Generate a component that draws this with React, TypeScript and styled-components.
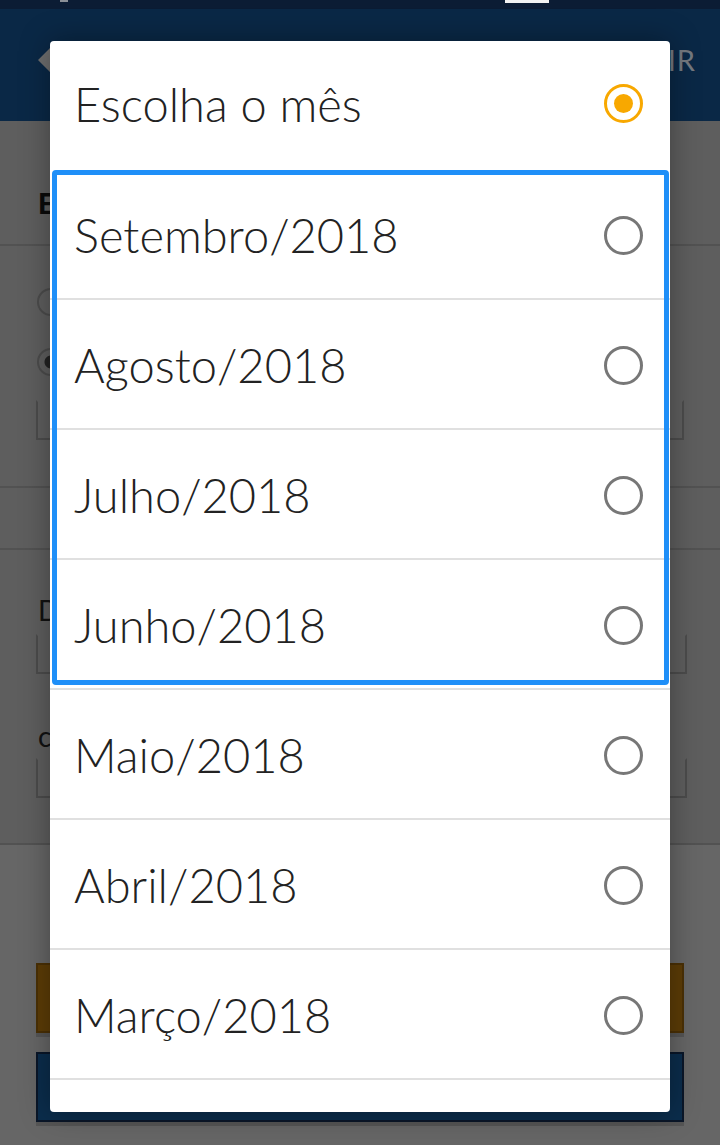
import React from 'react';
import styled, { createGlobalStyle } from 'styled-components';

const GlobalStyle = createGlobalStyle`
  html, body {
    margin: 0;
    padding: 0;
    background: #666666;
  }
  body {
    font-family: Lato, 'Open Sans', sans-serif;
  }
`;

const months = [
  'Setembro/2018',
  'Agosto/2018',
  'Julho/2018',
  'Junho/2018',
  'Maio/2018',
  'Abril/2018',
  'Março/2018',
];

const Screen = styled.div`
  position: relative;
  width: 720px;
  height: 1145px;
  overflow: hidden;
  background: #666666;
`;

const StatusBar = styled.div`
  height: 9px;
  background: #0b1c34;
  display: flex;
  align-items: flex-start;
  padding-left: 60px;
  gap: 437px;

  span {
    display: block;
    width: 8px;
    height: 2px;
    background: #8a8f96;
  }
  span + span {
    width: 44px;
    height: 3px;
    background: #f2f2f2;
  }
`;

const Header = styled.header`
  height: 112px;
  background: #0a2846;
  display: flex;
  align-items: center;
  justify-content: space-between;
  padding: 0 24px 0 38px;
  color: #74797f;
  font-size: 29px;
`;

const BackIcon = styled.svg`
  width: 30px;
  height: 24px;
  margin-top: -10px;
`;

const HeaderAction = styled.span`
  margin-top: -12px;
  letter-spacing: 1px;
`;

const Card = styled.section`
  background: #5e5e5e;
  border-bottom: 2px solid #525252;
  height: 724px;
  box-sizing: border-box;
`;

const CardTitle = styled.h2`
  margin: 0;
  height: 125px;
  box-sizing: border-box;
  padding: 68px 0 0 38px;
  font-size: 28px;
  line-height: 28px;
  font-weight: 900;
  color: #0a0a0a;
  border-bottom: 2px solid #525252;
`;

const Block = styled.div<{ $h: number }>`
  height: ${({ $h }) => $h}px;
  box-sizing: border-box;
  padding: 0 36px;
  border-bottom: 2px solid #525252;
  display: flex;
  flex-direction: column;
`;

const GhostRadio = styled.span<{ $on?: boolean }>`
  width: 24px;
  height: 24px;
  border: 2px solid #4c4c4c;
  border-radius: 50%;
  margin: 0 0 0 1px;
  background: ${({ $on }) => ($on ? 'radial-gradient(circle, #222 0 6px, transparent 7px)' : 'transparent')};
`;

const GhostInput = styled.div<{ $w: number; $h: number }>`
  width: ${({ $w }) => $w}px;
  height: ${({ $h }) => $h}px;
  border: 2px solid #4c4c4c;
  border-top-color: transparent;
  box-sizing: border-box;
`;

const GhostLabel = styled.span`
  font-size: 28px;
  line-height: 28px;
  color: #111;
  margin-left: 2px;
`;

const Lower = styled.div`
  padding: 118px 36px 0;
  display: flex;
  flex-direction: column;
  gap: 19px;
`;

const GhostButton = styled.div<{ $bg: string; $edge: string }>`
  width: 648px;
  height: 70px;
  box-sizing: border-box;
  background: ${({ $bg }) => $bg};
  border: 2px solid ${({ $edge }) => $edge};
  box-shadow: 0 4px 0 #555;
`;

const Dialog = styled.div`
  position: absolute;
  left: 50px;
  top: 41px;
  width: 620px;
  height: 1071px;
  background: #ffffff;
  border-radius: 4px;
  overflow: hidden;
  box-shadow: 0 0 30px rgba(0, 0, 0, 0.35);
`;

const TitleRow = styled.div`
  height: 129px;
  display: flex;
  align-items: center;
  justify-content: space-between;
  padding: 0 27px 0 24px;
  font-size: 47px;
  font-weight: 300;
  color: #222222;

  span {
    margin-top: -4px;
  }
`;

const Highlight = styled.div`
  position: relative;

  &::after {
    content: '';
    position: absolute;
    left: 2px;
    right: 1px;
    top: 0;
    height: 515px;
    box-sizing: border-box;
    border: 5px solid #1f8ff8;
    border-radius: 4px;
    pointer-events: none;
  }
`;

const OptionRow = styled.div`
  height: 130px;
  box-sizing: border-box;
  border-bottom: 2px solid #e0e0e0;
  display: flex;
  align-items: center;
  justify-content: space-between;
  padding: 2px 27px 0 24px;
  font-size: 47px;
  font-weight: 300;
  color: #222222;
`;

const Radio = styled.span<{ $checked?: boolean }>`
  flex: none;
  width: 39px;
  height: 39px;
  box-sizing: border-box;
  border-radius: 50%;
  border: 3px solid ${({ $checked }) => ($checked ? '#f8a800' : '#777777')};
  display: flex;
  align-items: center;
  justify-content: center;

  &::after {
    content: '';
    width: 19px;
    height: 19px;
    border-radius: 50%;
    background: ${({ $checked }) => ($checked ? '#f8a800' : 'transparent')};
  }
`;

const Option = ({ label }: { label: string }) => (
  <OptionRow>
    <span>{label}</span>
    <Radio />
  </OptionRow>
);

export default function App() {
  return (
    <Screen>
      <GlobalStyle />
      <StatusBar>
        <span />
        <span />
      </StatusBar>
      <Header>
        <BackIcon viewBox="0 0 30 24">
          <path d="M0 12 L12 0 L12 7 L30 7 L30 17 L12 17 L12 24 Z" fill="#6e6e6e" />
        </BackIcon>
        <HeaderAction>SAIR</HeaderAction>
      </Header>

      <Card>
        <CardTitle>E</CardTitle>
        <Block $h={242} style={{ paddingTop: 42, gap: 32 }}>
          <GhostRadio />
          <GhostRadio $on />
          <GhostInput $w={648} $h={40} style={{ marginTop: -8 }} />
        </Block>
        <Block $h={62} />
        <Block $h={297} style={{ borderBottom: 'none', paddingTop: 46 }}>
          <GhostLabel>D</GhostLabel>
          <GhostInput $w={651} $h={40} style={{ marginTop: 10 }} />
          <GhostLabel style={{ marginTop: 48 }}>c</GhostLabel>
          <GhostInput $w={651} $h={40} style={{ marginTop: 8 }} />
        </Block>
      </Card>

      <Lower>
        <GhostButton $bg="#5c3c06" $edge="#4a3005" />
        <GhostButton $bg="#0b2d4c" $edge="#0a1628" />
      </Lower>

      <Dialog>
        <TitleRow>
          <span>Escolha o mês</span>
          <Radio $checked />
        </TitleRow>
        <Highlight>
          {months.slice(0, 4).map((m) => (
            <Option key={m} label={m} />
          ))}
        </Highlight>
        {months.slice(4).map((m) => (
          <Option key={m} label={m} />
        ))}
      </Dialog>
    </Screen>
  );
}
